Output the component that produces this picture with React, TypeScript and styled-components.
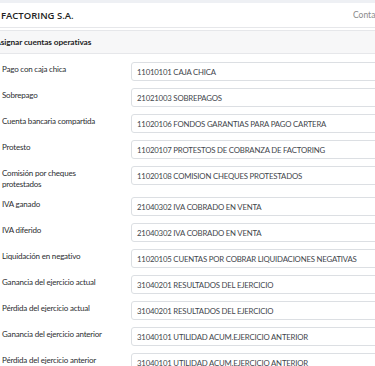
import React from 'react';
import styled, { createGlobalStyle } from 'styled-components';

const GlobalStyle = createGlobalStyle`
  body {
    margin: 0;
    overflow: hidden;
    background: #ffffff;
    font-family: Lato, "Open Sans", sans-serif;
  }
`;

const Page = styled.div`
  width: 440px;
  background: #ffffff;
`;

const TopStrip = styled.div`
  height: 3px;
  background: #eef0f4;
`;

const Header = styled.header`
  display: grid;
  grid-template-columns: 352px auto;
  align-items: center;
  height: 24px;
  padding-left: 1px;
  border-bottom: 1px solid #e6e7ea;
`;

const Brand = styled.div`
  font-family: "Open Sans", sans-serif;
  font-size: 9.5px;
  font-weight: 600;
  color: #222222;
  white-space: nowrap;
`;

const NavLink = styled.div`
  font-size: 8.5px;
  color: #8a8a8a;
  white-space: nowrap;
`;

const SectionHeader = styled.div`
  display: flex;
  align-items: center;
  height: 22px;
  margin-top: 2px;
  background: #f7f7f8;
  border-top: 1px solid #e6e7ea;
  border-bottom: 1px solid #e6e7ea;
  overflow: hidden;
`;

const SectionTitle = styled.h2`
  margin: 0 0 0 -5px;
  font-size: 8.3px;
  font-weight: 700;
  letter-spacing: -0.1px;
  color: #1e1e1e;
  white-space: nowrap;
`;

const Form = styled.form`
  padding-top: 8px;
`;

const Row = styled.div`
  display: grid;
  grid-template-columns: 131px 1fr;
  align-items: start;
  margin-bottom: 7px;
`;

const Label = styled.label`
  width: 106px;
  padding: 2px 0 0 2px;
  font-size: 8px;
  letter-spacing: -0.2px;
  line-height: 11px;
  color: #2b2d30;
`;

const Field = styled.div`
  display: flex;
  align-items: center;
  height: 17px;
  padding: 0 5px;
  border: 1px solid #dcdfe3;
  border-radius: 3px;
  font-size: 7.8px;
  letter-spacing: -0.2px;
  color: #42464c;
  white-space: nowrap;
  overflow: hidden;
`;

interface Cuenta {
  label: string;
  value: string;
}

const cuentas: Cuenta[] = [
  { label: 'Pago con caja chica', value: '11010101 CAJA CHICA' },
  { label: 'Sobrepago', value: '21021003 SOBREPAGOS' },
  { label: 'Cuenta bancaria compartida', value: '11020106 FONDOS GARANTIAS PARA PAGO CARTERA' },
  { label: 'Protesto', value: '11020107 PROTESTOS DE COBRANZA DE FACTORING' },
  { label: 'Comisión por cheques protestados', value: '11020108 COMISION CHEQUES PROTESTADOS' },
  { label: 'IVA ganado', value: '21040302 IVA COBRADO EN VENTA' },
  { label: 'IVA diferido', value: '21040302 IVA COBRADO EN VENTA' },
  { label: 'Liquidación en negativo', value: '11020105 CUENTAS POR COBRAR LIQUIDACIONES NEGATIVAS' },
  { label: 'Ganancia del ejercicio actual', value: '31040201 RESULTADOS DEL EJERCICIO' },
  { label: 'Pérdida del ejercicio actual', value: '31040201 RESULTADOS DEL EJERCICIO' },
  { label: 'Ganancia del ejercicio anterior', value: '31040101 UTILIDAD ACUM.EJERCICIO ANTERIOR' },
  { label: 'Pérdida del ejercicio anterior', value: '31040101 UTILIDAD ACUM.EJERCICIO ANTERIOR' },
];

const App: React.FC = () => {
  return (
    <Page>
      <GlobalStyle />
      <TopStrip />
      <Header>
        <Brand>FACTORING S.A.</Brand>
        <NavLink>Contabilidad</NavLink>
      </Header>
      <SectionHeader>
        <SectionTitle>Asignar cuentas operativas</SectionTitle>
      </SectionHeader>
      <Form>
        {cuentas.map((c, i) => (
          <Row key={i}>
            <Label>{c.label}</Label>
            <Field>{c.value}</Field>
          </Row>
        ))}
      </Form>
    </Page>
  );
};

export default App;
